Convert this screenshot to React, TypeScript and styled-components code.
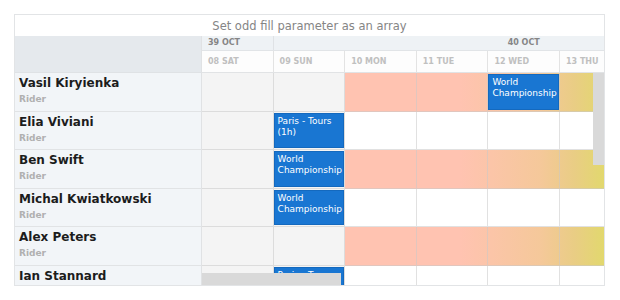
import React from 'react'
import styled, { createGlobalStyle } from 'styled-components'

const COL = 71.6
const ROW = 38.6

const days = ['08 SAT', '09 SUN', '10 MON', '11 TUE', '12 WED', '13 THU']
const weekend = [0, 1]

const weeks = [
  { label: '39 OCT', span: 1, align: 'left' },
  { label: '40 OCT', span: 7, align: 'center' }
]

type Ev = { col: number; text: string }

const riders: { name: string; fill: boolean; events: Ev[] }[] = [
  { name: 'Vasil Kiryienka', fill: true, events: [{ col: 4, text: 'World Championship' }] },
  { name: 'Elia Viviani', fill: false, events: [{ col: 1, text: 'Paris - Tours (1h)' }] },
  { name: 'Ben Swift', fill: true, events: [{ col: 1, text: 'World Championship' }] },
  { name: 'Michal Kwiatkowski', fill: false, events: [{ col: 1, text: 'World Championship' }] },
  { name: 'Alex Peters', fill: true, events: [] },
  { name: 'Ian Stannard', fill: false, events: [{ col: 1, text: 'Paris - Tours (1h)' }] }
]

const GlobalStyle = createGlobalStyle`
  body {
    margin: 0;
    background: #ffffff;
    font-family: "DejaVu Sans", "Liberation Sans", sans-serif;
  }
`

export default function App() {
  return (
    <Page>
      <GlobalStyle />
      <Scheduler>
        <Title>Set odd fill parameter as an array</Title>
        <Body>
          <ResourcePanel>
            <ResourceHeader />
            {riders.map(r => (
              <ResourceRow key={r.name}>
                <Name>{r.name}</Name>
                <Role>Rider</Role>
              </ResourceRow>
            ))}
          </ResourcePanel>
          <Timeline>
            <Track>
              <WeekRow>
                {weeks.map(w => (
                  <WeekCell key={w.label} $span={w.span} $align={w.align}>{w.label}</WeekCell>
                ))}
              </WeekRow>
              <DayRow>
                {days.map(d => <DayCell key={d}>{d}</DayCell>)}
              </DayRow>
              <Rows>
                {riders.map(r => (
                  <GridRow key={r.name}>
                    {r.fill && <Fill />}
                    {days.map((d, i) => (
                      <Cell key={d} $col={i} $weekend={weekend.includes(i)} />
                    ))}
                    {r.events.map(e => (
                      <Event key={e.text} $col={e.col}>{e.text}</Event>
                    ))}
                  </GridRow>
                ))}
              </Rows>
            </Track>
            <VScroll />
            <HScroll />
          </Timeline>
        </Body>
      </Scheduler>
    </Page>
  )
}

const Page = styled.div`
  padding: 14px;
`

const Scheduler = styled.div`
  width: 591px;
  height: 272px;
  box-sizing: border-box;
  border: 1px solid #e2e4e6;
  display: flex;
  flex-direction: column;
  overflow: hidden;
`

const Title = styled.div`
  height: 21px;
  flex-shrink: 0;
  display: flex;
  align-items: center;
  justify-content: center;
  font-size: 11.5px;
  color: #858585;
`

const Body = styled.div`
  flex: 1;
  display: grid;
  grid-template-columns: 187px 1fr;
  min-height: 0;
`

const ResourcePanel = styled.div`
  box-sizing: border-box;
  border-right: 1px solid #e0e2e4;
  background: #f2f5f8;
  overflow: hidden;
`

const ResourceHeader = styled.div`
  height: 37px;
  box-sizing: border-box;
  background: #e5e9ed;
  border-bottom: 1px solid #dfe2e5;
`

const ResourceRow = styled.div`
  height: ${ROW}px;
  box-sizing: border-box;
  border-bottom: 1px solid #e1e3e5;
  padding: 2px 4px 0;
  display: flex;
  flex-direction: column;
`

const Name = styled.div`
  font-size: 12px;
  font-weight: bold;
  color: #1c1c1c;
  line-height: 16px;
`

const Role = styled.div`
  font-size: 9px;
  font-weight: bold;
  color: #b0b0b0;
  margin-top: 3px;
`

const Timeline = styled.div`
  position: relative;
  overflow: hidden;
`

const Track = styled.div`
  width: ${COL * 7}px;
`

const WeekRow = styled.div`
  height: 15px;
  box-sizing: border-box;
  display: flex;
  background: #eef2f5;
  border-bottom: 1px solid #e1e4e7;
`

const WeekCell = styled.div<{ $span: number; $align: string }>`
  flex-shrink: 0;
  width: ${p => p.$span * COL}px;
  box-sizing: border-box;
  border-right: 1px solid #dfe2e5;
  padding: 0 6px;
  font-size: 8px;
  font-weight: bold;
  color: #858585;
  line-height: 14px;
  text-align: ${p => p.$align};
`

const DayRow = styled.div`
  height: 22px;
  box-sizing: border-box;
  display: flex;
  background: #fdfdfd;
  border-bottom: 1px solid #e1e3e5;
`

const DayCell = styled.div`
  flex-shrink: 0;
  width: ${COL}px;
  box-sizing: border-box;
  border-right: 1px solid #e3e3e3;
  padding: 0 6px;
  font-size: 8px;
  font-weight: bold;
  color: #c0c0c0;
  line-height: 21px;
`

const Rows = styled.div`
  display: flex;
  flex-direction: column;
`

const GridRow = styled.div`
  height: ${ROW}px;
  display: grid;
  grid-template-columns: repeat(7, ${COL}px);
  grid-template-rows: 1fr;
`

const Fill = styled.div`
  grid-row: 1;
  grid-column: 3 / 7;
  background: linear-gradient(to right, #ffc3b1 40%, #f5c89a 68%, #e9cd84 80%, #e1d96c 91%, #e0da6a 100%);
`

const Cell = styled.div<{ $col: number; $weekend: boolean }>`
  grid-row: 1;
  grid-column: ${p => p.$col + 1};
  box-sizing: border-box;
  border-right: 1px solid rgba(200, 200, 200, 0.55);
  border-bottom: 1px solid rgba(200, 200, 200, 0.55);
  background: ${p => (p.$weekend ? '#f4f4f4' : 'transparent')};
`

const Event = styled.div`
  grid-row: 1;
  grid-column: ${(p: { $col: number }) => p.$col + 1};
  margin: 1px 1px 2px 0;
  box-sizing: border-box;
  background: #1976d2;
  border: 1px solid #1469be;
  padding: 2px 3px;
  font-size: 9px;
  line-height: 11px;
  color: #ffffff;
  overflow: hidden;
  z-index: 1;
`

const VScroll = styled.div`
  position: absolute;
  right: 0;
  top: 37px;
  width: 11px;
  height: 92px;
  background: #d9d9d9;
  z-index: 2;
`

const HScroll = styled.div`
  position: absolute;
  left: 0;
  bottom: 0;
  width: 139px;
  height: 12px;
  background: #d9d9d9;
  z-index: 2;
`
